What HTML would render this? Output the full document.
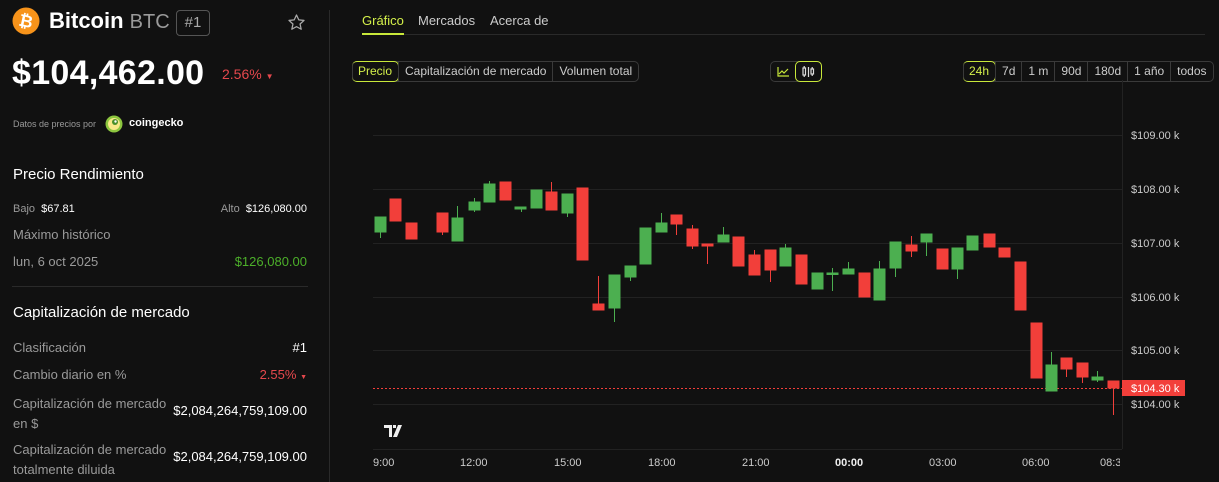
<!DOCTYPE html>
<html><head><meta charset="utf-8"><style>
*{margin:0;padding:0;box-sizing:border-box}
body{width:1219px;height:482px;background:#111111;font-family:"Liberation Sans","DejaVu Sans",sans-serif;color:#fff;position:relative;overflow:hidden}
.a{position:absolute;white-space:nowrap}
.g{color:#9a9a9a}
.btn{position:absolute;height:21px;border:1px solid #3a3a3a;border-radius:5px;display:flex;font-size:12px;color:#ccc}
.btn span{padding:0 6px;line-height:19px;border-left:1px solid #3a3a3a}
.btn span:first-child{border-left:none}
.btn .on{color:#d4f04a;border:1px solid #c8e83a;border-radius:5px;margin:-1px}
</style></head><body>
<div style="position:absolute;left:329px;top:10px;width:1px;height:472px;background:#2a2a2a"></div>
<svg class="a" style="left:12px;top:7px" width="28" height="28" viewBox="0 0 28 28"><circle cx="14" cy="14" r="13.5" fill="#f7931a"/><text x="14" y="20" text-anchor="middle" font-family="Liberation Sans" font-weight="bold" font-size="17" fill="#fff" transform="rotate(12 14 14)">₿</text></svg>
<div class="a" style="left:49px;top:8px;font-size:22px;font-weight:bold">Bitcoin <span style="font-weight:normal;color:#9a9a9a;font-size:20px">BTC</span></div>
<div class="a" style="left:176px;top:10px;width:34px;height:26px;border:1px solid #555;border-radius:4px;color:#aaa;font-size:15px;text-align:center;line-height:24px">#1</div>
<svg class="a" style="left:287px;top:13px" width="19" height="19" viewBox="0 0 24 24"><path d="M12 2.5l2.9 6.2 6.6.7-5 4.5 1.4 6.6L12 17.2l-5.9 3.3 1.4-6.6-5-4.5 6.6-.7z" fill="none" stroke="#aaa" stroke-width="1.6" stroke-linejoin="round"/></svg>
<div class="a" style="left:12px;top:54px;font-size:34px;font-weight:bold;letter-spacing:0.3px">$104,462.00</div>
<div class="a" style="left:222px;top:66px;font-size:14px;color:#e5484d">2.56% <span style="font-size:8px">▼</span></div>
<div class="a g" style="left:13px;top:119px;font-size:9px">Datos de precios por</div>
<svg class="a" style="left:105px;top:115px" width="18" height="18" viewBox="0 0 18 18"><circle cx="9" cy="9" r="8.5" fill="#8dc63f"/><circle cx="9" cy="9" r="6" fill="#f9e988"/><circle cx="10" cy="7" r="3" fill="#4a8f2a"/><circle cx="10.5" cy="6.5" r="1.2" fill="#fff"/></svg>
<div class="a" style="left:129px;top:117px;font-size:11px;font-weight:bold">coingecko</div>
<div class="a" style="left:13px;top:166px;font-size:15px">Precio Rendimiento</div>
<div class="a" style="left:13px;top:203px;font-size:11px"><span class="g">Bajo</span>&nbsp; $67.81</div>
<div class="a" style="right:912px;top:203px;font-size:11px"><span class="g">Alto</span>&nbsp; $126,080.00</div>
<div class="a g" style="left:13px;top:227px;font-size:13px">Máximo histórico</div>
<div class="a g" style="left:13px;top:254px;font-size:13px">lun, 6 oct 2025</div>
<div class="a" style="right:912px;top:254px;font-size:13px;color:#4caf2a">$126,080.00</div>
<div class="a" style="left:12px;top:286px;width:296px;height:1px;background:#2a2a2a"></div>
<div class="a" style="left:13px;top:304px;font-size:15px">Capitalización de mercado</div>
<div class="a g" style="left:13px;top:340px;font-size:13px">Clasificación</div>
<div class="a" style="right:912px;top:340px;font-size:13px">#1</div>
<div class="a g" style="left:13px;top:367px;font-size:13px">Cambio diario en %</div>
<div class="a" style="right:912px;top:367px;font-size:13px;color:#e5484d">2.55% <span style="font-size:7px">▼</span></div>
<div class="a g" style="left:13px;top:394px;font-size:13px;line-height:20px">Capitalización de mercado<br>en $</div>
<div class="a" style="right:912px;top:403px;font-size:13px">$2,084,264,759,109.00</div>
<div class="a g" style="left:13px;top:440px;font-size:13px;line-height:20px">Capitalización de mercado<br>totalmente diluida</div>
<div class="a" style="right:912px;top:449px;font-size:13px">$2,084,264,759,109.00</div>
<div class="a" style="left:362px;top:13px;font-size:13px;color:#d4f04a">Gráfico</div>
<div class="a" style="left:362px;top:33px;width:42px;height:2px;background:#c8e83a"></div>
<div class="a" style="left:418px;top:13px;font-size:13px;color:#ccc">Mercados</div>
<div class="a" style="left:490px;top:13px;font-size:13px;color:#ccc">Acerca de</div>
<div class="a" style="left:404px;top:34px;width:801px;height:1px;background:#2a2a2a"></div>
<div class="btn" style="left:352px;top:61px"><span class="on">Precio</span><span>Capitalización de mercado</span><span>Volumen total</span></div>
<div class="btn" style="left:770px;top:61px;width:52px"><span style="width:25px;padding:0"><svg width="25" height="19" viewBox="0 0 25 19"><path d="M7 5v9h11M8 12l3-3 2 2 4-4" fill="none" stroke="#c8e83a" stroke-width="1.2"/></svg></span><span class="on" style="width:27px;padding:0"><svg width="25" height="19" viewBox="0 0 25 19"><g fill="none" stroke="#ddd" stroke-width="1.2"><rect x="7" y="6" width="2.5" height="7"/><path d="M8.2 4v2M8.2 13v2M12.5 5v10"/><rect x="15" y="7" width="2.5" height="5"/><path d="M16.2 5v2M16.2 12v2"/></g></svg></span></div>
<div class="btn" style="left:963px;top:61px"><span class="on">24h</span><span>7d</span><span>1 m</span><span>90d</span><span>180d</span><span>1 año</span><span>todos</span></div>
<svg class="a" style="left:0;top:0" width="1219" height="482">
<g stroke="#222" stroke-width="1"><line x1="373" y1="135.5" x2="1122" y2="135.5"/><line x1="373" y1="189.5" x2="1122" y2="189.5"/><line x1="373" y1="243.5" x2="1122" y2="243.5"/><line x1="373" y1="297.5" x2="1122" y2="297.5"/><line x1="373" y1="350.5" x2="1122" y2="350.5"/><line x1="373" y1="404.5" x2="1122" y2="404.5"/><line x1="373" y1="449.5" x2="1122" y2="449.5"/><line x1="1122.5" y1="80" x2="1122.5" y2="449"/></g>
<line x1="373" y1="388.5" x2="1122" y2="388.5" stroke="#f23f3a" stroke-dasharray="2,2"/>
<g stroke="#4caf50" fill="#4caf50">
<line x1="380.5" y1="217" x2="380.5" y2="238"/><rect x="375" y="217" width="11" height="15"/>
<line x1="457.5" y1="206" x2="457.5" y2="241"/><rect x="452" y="218" width="11" height="23"/>
<line x1="474.5" y1="198" x2="474.5" y2="212"/><rect x="469" y="202" width="11" height="8"/>
<line x1="489.5" y1="181" x2="489.5" y2="202"/><rect x="484" y="184" width="11" height="18"/>
<line x1="521.5" y1="207" x2="521.5" y2="212"/><rect x="515" y="207" width="11" height="2"/>
<rect x="531" y="190" width="11" height="18"/>
<line x1="567.5" y1="194" x2="567.5" y2="217"/><rect x="562" y="194" width="11" height="19"/>
<line x1="614.5" y1="275" x2="614.5" y2="322"/><rect x="609" y="275" width="11" height="33"/>
<line x1="630.5" y1="266" x2="630.5" y2="281"/><rect x="625" y="266" width="11" height="11"/>
<rect x="640" y="228" width="11" height="36"/>
<line x1="661.5" y1="213" x2="661.5" y2="232"/><rect x="656" y="223" width="11" height="9"/>
<line x1="723.5" y1="227" x2="723.5" y2="242"/><rect x="718" y="235" width="11" height="7"/>
<line x1="785.5" y1="244" x2="785.5" y2="266"/><rect x="780" y="248" width="11" height="18"/>
<rect x="812" y="273" width="11" height="16"/>
<line x1="832.5" y1="268" x2="832.5" y2="291"/><rect x="827" y="273" width="11" height="1.5"/>
<line x1="848.5" y1="262" x2="848.5" y2="274"/><rect x="843" y="269" width="11" height="5"/>
<line x1="879.5" y1="261" x2="879.5" y2="300"/><rect x="874" y="269" width="11" height="31"/>
<line x1="895.5" y1="242" x2="895.5" y2="277"/><rect x="890" y="242" width="11" height="26"/>
<line x1="926.5" y1="234" x2="926.5" y2="256"/><rect x="921" y="234" width="11" height="8"/>
<line x1="957.5" y1="248" x2="957.5" y2="279"/><rect x="952" y="248" width="11" height="21"/>
<rect x="967" y="236" width="11" height="14"/>
<line x1="1051.5" y1="352" x2="1051.5" y2="391"/><rect x="1046" y="365" width="11" height="26"/>
<line x1="1097.5" y1="371" x2="1097.5" y2="382"/><rect x="1092" y="377" width="11" height="3"/>
</g>
<g stroke="#f23f3a" fill="#f23f3a">
<rect x="390" y="199" width="11" height="22"/>
<rect x="406" y="223" width="11" height="16"/>
<line x1="442.5" y1="213" x2="442.5" y2="235"/><rect x="437" y="213" width="11" height="19"/>
<rect x="500" y="182" width="11" height="18"/>
<line x1="551.5" y1="182" x2="551.5" y2="210"/><rect x="546" y="192" width="11" height="18"/>
<rect x="577" y="188" width="11" height="72"/>
<line x1="598.5" y1="276" x2="598.5" y2="310"/><rect x="593" y="304" width="11" height="6"/>
<line x1="676.5" y1="215" x2="676.5" y2="235"/><rect x="671" y="215" width="11" height="9"/>
<line x1="692.5" y1="225" x2="692.5" y2="249"/><rect x="687" y="229" width="11" height="17"/>
<line x1="707.5" y1="244" x2="707.5" y2="264"/><rect x="702" y="244" width="11" height="2"/>
<rect x="733" y="237" width="11" height="29"/>
<line x1="754.5" y1="250" x2="754.5" y2="275"/><rect x="749" y="255" width="11" height="20"/>
<line x1="770.5" y1="250" x2="770.5" y2="282"/><rect x="765" y="250" width="11" height="20"/>
<rect x="796" y="255" width="11" height="29"/>
<rect x="859" y="273" width="11" height="24"/>
<line x1="911.5" y1="236" x2="911.5" y2="257"/><rect x="906" y="245" width="11" height="6"/>
<rect x="937" y="249" width="11" height="20"/>
<rect x="984" y="234" width="11" height="13"/>
<rect x="999" y="248" width="11" height="9"/>
<rect x="1015" y="262" width="11" height="48"/>
<rect x="1031" y="323" width="11" height="55"/>
<line x1="1066.5" y1="358" x2="1066.5" y2="377"/><rect x="1061" y="358" width="11" height="11"/>
<line x1="1082.5" y1="363" x2="1082.5" y2="383"/><rect x="1077" y="363" width="11" height="14"/>
<line x1="1113.5" y1="381" x2="1113.5" y2="415"/><rect x="1108" y="381" width="11" height="7"/>
</g>
<rect x="1122" y="380" width="63" height="16" fill="#f23f3a"/>
<text x="1131" y="392" font-family="Liberation Sans" font-size="11" fill="#fff">$104.30 k</text>
<g font-family="Liberation Sans" font-size="11" fill="#ccc">
<text x="1131" y="139">$109.00 k</text><text x="1131" y="193">$108.00 k</text><text x="1131" y="247">$107.00 k</text><text x="1131" y="301">$106.00 k</text><text x="1131" y="354">$105.00 k</text><text x="1131" y="408">$104.00 k</text>
<text x="373" y="466">9:00</text><text x="460" y="466">12:00</text><text x="554" y="466">15:00</text><text x="648" y="466">18:00</text><text x="742" y="466">21:00</text><text x="835" y="466" font-weight="bold" fill="#eee">00:00</text><text x="929" y="466">03:00</text><text x="1022" y="466">06:00</text><text x="1100" y="466">08:30</text>
</g>
<rect x="1120" y="452" width="99" height="30" fill="#111"/>
<path d="M384 425h8v12h-3v-9h-5z M393 425h3v3h-3z M398 425h4l-5 12h-4z" fill="#eee"/>
</svg>
</body></html>
